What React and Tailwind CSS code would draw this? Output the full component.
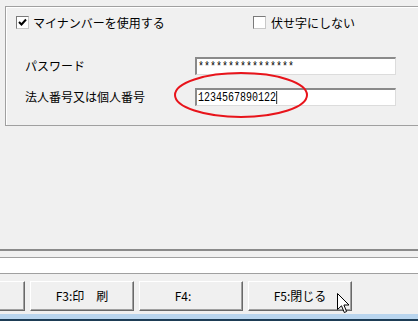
import React from 'react';

const jp = "font-['Noto_Sans_CJK_JP','Noto_Sans',sans-serif]";

const CheckBox = ({ checked }) => (
  <div className="w-[13px] h-[13px] shrink-0 bg-white border border-t-[#7a7a7a] border-l-[#7a7a7a] border-r-[#c8c8c8] border-b-[#c8c8c8] flex items-center justify-center">
    {checked && (
      <svg width="9" height="9" viewBox="0 0 9 9">
        <path d="M1 4 L3.5 6.5 L8 1.5" stroke="#000" strokeWidth="2" fill="none" />
      </svg>
    )}
  </div>
);

const Field = ({ value, caret }) => (
  <div className="w-[201px] h-[18px] bg-white border-t-2 border-l-2 border-t-[#8a8a8a] border-l-[#8a8a8a] border-r border-b border-r-[#dcdcdc] border-b-[#dcdcdc] flex items-center pl-[1px] overflow-hidden">
    <div className="flex items-center origin-left scale-x-[0.833]">
      <span className="font-['Liberation_Mono',monospace] text-[12px] leading-none text-black">{value}</span>
      {caret && <span className="w-[1.2px] h-[13px] bg-black" />}
    </div>
  </div>
);

const FnButton = ({ children }) => (
  <div className={`w-[104px] h-[30px] shrink-0 border border-t-white border-l-white border-r-[#696969] border-b-[#696969] shadow-[inset_-1px_-1px_0_#a0a0a0] bg-[#f0f0f0] flex items-center justify-center ${jp} text-[12px] leading-none text-black whitespace-pre`}>
    {children}
  </div>
);

const Cursor = () => (
  <svg width="13" height="21" viewBox="0 0 13 21" className="absolute left-[337px] top-[293px]">
    <path d="M0.5 0.5 L0.5 16.5 L4.5 12.8 L7.3 19.5 L9.6 18.5 L6.9 12 L12 12 Z" fill="#fff" stroke="#000" strokeWidth="1" strokeLinejoin="round" />
  </svg>
);

export default function App() {
  return (
    <div className={`relative w-[418px] h-[321px] overflow-hidden bg-[#f0f0f0] flex flex-col ${jp} text-[12px] text-black`}>
      <div className="pt-[6px] pl-[5px]">
        <div className="h-[120px] border-l border-t border-b border-[#a0a0a0] shadow-[inset_1px_1px_0_#ffffff] pt-[9px] pl-[10px]">
          <div className="flex items-center h-[13px]">
            <div className="w-[237px] shrink-0 flex items-center gap-[4px]">
              <CheckBox checked />
              <span className="leading-none">マイナンバーを使用する</span>
            </div>
            <div className="flex items-center gap-[5px]">
              <CheckBox />
              <span className="leading-none">伏せ字にしない</span>
            </div>
          </div>

          <div className="mt-[28px] flex flex-col gap-[13px] pl-[9px]">
            <div className="flex items-center h-[18px]">
              <span className="w-[170px] shrink-0 leading-none">パスワード</span>
              <Field value="****************" />
            </div>
            <div className="flex items-center h-[18px]">
              <span className="w-[170px] shrink-0 leading-none">法人番号又は個人番号</span>
              <Field value="1234567890122" caret />
            </div>
          </div>
        </div>
      </div>

      <div className="flex-1" />

      <div className="h-[72px] flex flex-col">
        <div className="h-[2px] bg-[#8a8a8a]" />
        <div className="h-[6px]" />
        <div className="h-[17px] bg-white border-t border-b border-[#a0a0a0]" />
        <div className="h-[7px]" />
        <div className="flex gap-[5px] ml-[-79px] h-[30px]">
          <FnButton> </FnButton>
          <FnButton>F3:印　刷</FnButton>
          <FnButton>{'F4:      '}</FnButton>
          <FnButton>F5:閉じる</FnButton>
        </div>
        <div className="h-[3px]" />
        <div className="h-[5px] bg-[#b9d5ee]" />
        <div className="flex-1 bg-[#1d3c55]" />
      </div>

      <svg width="136" height="48" viewBox="0 0 136 48" className="absolute left-[174px] top-[72px]">
        <ellipse cx="67" cy="23" rx="66" ry="22" fill="none" stroke="#e8141b" strokeWidth="2" />
      </svg>

      <Cursor />
    </div>
  );
}
